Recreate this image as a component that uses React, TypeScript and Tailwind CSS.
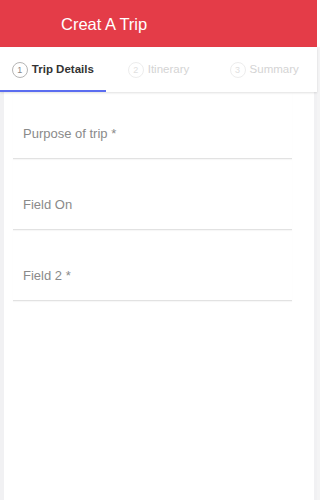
import React from "react";

const steps = [
  { n: 1, label: "Trip Details", active: true },
  { n: 2, label: "Itinerary", active: false },
  { n: 3, label: "Summary", active: false },
];

const fields = ["Purpose of trip *", "Field On", "Field 2 *"];

export default function App() {
  return (
    <div className="w-[320px] h-[500px] bg-white flex font-['Liberation_Sans',Arial,sans-serif] overflow-hidden">
      <div className="w-[317px] flex flex-col">
        <header className="h-[47px] shrink-0 bg-[#e43c48] flex items-center pl-[61px] pt-[1px]">
          <h1 className="text-white text-[16.5px] leading-none">Creat A Trip</h1>
        </header>

        <nav className="h-[45px] shrink-0 flex bg-white shadow-[0_1px_2px_rgba(0,0,0,0.12)] relative z-10">
          {steps.map((s) => (
            <div
              key={s.n}
              className={
                "flex-1 flex items-center justify-center gap-[4px] pt-[3px] border-b-2 " +
                (s.active ? "border-[#5b6df0]" : "border-transparent")
              }
            >
              <span
                className={
                  "w-[16px] h-[16px] rounded-full border flex items-center justify-center text-[9px] leading-none " +
                  (s.active ? "border-[#b5b5b5] text-[#888]" : "border-[#ededed] text-[#e0e0e0]")
                }
              >
                {s.n}
              </span>
              <span
                className={
                  "text-[11.5px] leading-none " +
                  (s.active ? "font-bold text-[#333]" : "text-[#d4d4d4]")
                }
              >
                {s.label}
              </span>
            </div>
          ))}
        </nav>

        <main className="flex-1 bg-[#f1f1f3] pl-[4px] pr-[3px]">
          <div className="h-full bg-white pl-[9px] pr-[22px]">
            {fields.map((f, i) => (
              <div
                key={f}
                className={
                  "border-b border-[#e2e2e2] pb-[16px] pl-[10px] shadow-[0_1px_1px_rgba(0,0,0,0.03)] " +
                  (i === 0 ? "pt-[34px]" : "pt-[38px]")
                }
              >
                <span className="block text-[13px] leading-[16px] text-[#8a8a8a]">{f}</span>
              </div>
            ))}
          </div>
        </main>
      </div>
      <div className="w-[3px] flex flex-col">
        <div className="h-[47px] bg-white" />
        <div className="flex-1 bg-[#f4f4f5]" />
      </div>
    </div>
  );
}
